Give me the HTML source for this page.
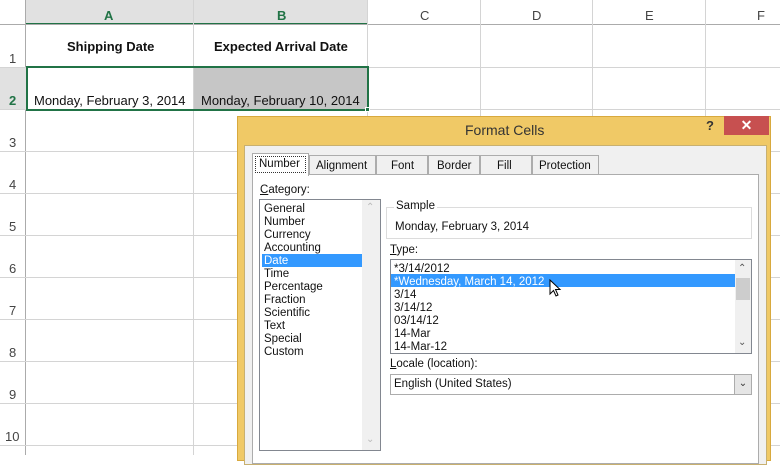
<!DOCTYPE html><html><head><style>
*{margin:0;padding:0;box-sizing:border-box}
body{width:780px;height:455px;overflow:hidden;background:#fff;font-family:"Liberation Sans",sans-serif;position:relative;font-size:12px;color:#222}
.a{position:absolute}
.t{position:absolute;white-space:nowrap}
.vl{position:absolute;top:0;height:455px;width:1px;background:#d4d4d4}
.hl{position:absolute;left:0;width:780px;height:1px;background:#d4d4d4}
.rn{position:absolute;left:0;width:26px;font-size:13px;color:#444;text-align:left;padding-left:9px}
.li{position:absolute;font-size:11.5px;color:#111;white-space:nowrap}
</style></head><body>
<div class="a" style="left:0;top:0;width:780px;height:25px;background:#fff"></div>
<div class="a" style="left:26px;top:0;width:341px;height:24px;background:#e1e1e1"></div>
<div class="a" style="left:0;top:0;width:26px;height:455px;background:#fff;border-right:1px solid #ababab"></div>
<div class="a" style="left:0;top:67px;width:26px;height:42px;background:#e1e1e1"></div>
<div class="a" style="left:26px;top:23px;width:341px;height:2px;background:#217346"></div>
<div class="a" style="left:0;top:24px;width:780px;height:1px;background:#ababab"></div>
<div class="vl" style="left:193px"></div><div class="vl" style="left:367px"></div><div class="vl" style="left:480px"></div><div class="vl" style="left:592px"></div><div class="vl" style="left:705px"></div>
<div class="hl" style="top:67px"></div><div class="hl" style="top:109px"></div><div class="hl" style="top:151px"></div><div class="hl" style="top:193px"></div><div class="hl" style="top:235px"></div><div class="hl" style="top:277px"></div><div class="hl" style="top:319px"></div><div class="hl" style="top:361px"></div><div class="hl" style="top:403px"></div><div class="hl" style="top:445px"></div>
<div class="t" style="left:104px;top:8px;font-size:13px;color:#217346;font-weight:bold">A</div>
<div class="t" style="left:277px;top:8px;font-size:13px;color:#217346;font-weight:bold">B</div>
<div class="t" style="left:420px;top:8px;font-size:13px;color:#444">C</div>
<div class="t" style="left:532px;top:8px;font-size:13px;color:#444">D</div>
<div class="t" style="left:645px;top:8px;font-size:13px;color:#444">E</div>
<div class="t" style="left:757px;top:8px;font-size:13px;color:#444">F</div>
<div class="rn" style="top:51px">1</div><div class="rn" style="top:93px;color:#217346;font-weight:bold">2</div><div class="rn" style="top:135px">3</div><div class="rn" style="top:177px">4</div><div class="rn" style="top:219px">5</div><div class="rn" style="top:261px">6</div><div class="rn" style="top:303px">7</div><div class="rn" style="top:345px">8</div><div class="rn" style="top:387px">9</div><div class="rn" style="top:429px;padding-left:5px">10</div>
<div class="t" style="left:67px;top:39px;font-size:13px;font-weight:bold;color:#111">Shipping Date</div>
<div class="t" style="left:214px;top:39px;font-size:13px;font-weight:bold;color:#111">Expected Arrival Date</div>
<div class="a" style="left:194px;top:68px;width:173px;height:41px;background:#c6c6c6"></div>
<div class="a" style="left:26px;top:66px;width:343px;height:45px;border:2px solid #217346"></div>
<div class="a" style="left:365px;top:107px;width:5px;height:5px;background:#217346;border:1px solid #fff"></div>
<div class="t" style="left:34px;top:93px;font-size:13px;color:#111">Monday, February 3, 2014</div>
<div class="t" style="left:201px;top:93px;font-size:13px;color:#111">Monday, February 10, 2014</div>
<!-- dialog -->
<div class="a" style="left:237px;top:116px;width:534px;height:345px;background:#f0c966;border:1px solid #d8a93e"></div>
<div class="t" style="left:465px;top:122px;font-size:14px;color:#333">Format Cells</div>
<div class="t" style="left:706px;top:118px;font-size:13px;font-weight:bold;color:#333">?</div>
<div class="a" style="left:724px;top:116px;width:45px;height:19px;background:#c75050;color:#fff;text-align:center;font-size:14px;line-height:19px;font-weight:bold">✕</div>
<div class="a" style="left:244px;top:145px;width:523px;height:320px;background:#f0f0f0;border:1px solid #c8b070"></div>
<div class="a" style="left:252px;top:174px;width:507px;height:290px;background:#fff;border:1px solid #acacac"></div>
<div class="a" style="left:309px;top:155px;width:67px;height:20px;background:#f0f0f0;border:1px solid #acacac"></div>
<div class="a" style="left:376px;top:155px;width:52px;height:20px;background:#f0f0f0;border:1px solid #acacac"></div>
<div class="a" style="left:428px;top:155px;width:52px;height:20px;background:#f0f0f0;border:1px solid #acacac"></div>
<div class="a" style="left:480px;top:155px;width:52px;height:20px;background:#f0f0f0;border:1px solid #acacac"></div>
<div class="a" style="left:532px;top:155px;width:67px;height:20px;background:#f0f0f0;border:1px solid #acacac"></div>
<div class="a" style="left:252px;top:153px;width:57px;height:23px;background:#fff;border:1px solid #acacac;border-bottom:none"></div>
<div class="a" style="left:255px;top:156px;width:51px;height:17px;border:1px dotted #333"></div>
<div class="t" style="left:259px;top:158px;font-size:11.5px;color:#111">Number</div>
<div class="t" style="left:316px;top:160px;font-size:11.5px;color:#111">Alignment</div>
<div class="t" style="left:391px;top:160px;font-size:11.5px;color:#111">Font</div>
<div class="t" style="left:437px;top:160px;font-size:11.5px;color:#111">Border</div>
<div class="t" style="left:497px;top:160px;font-size:11.5px;color:#111">Fill</div>
<div class="t" style="left:539px;top:160px;font-size:11.5px;color:#111">Protection</div>
<div class="t" style="left:260px;top:184px;font-size:11.5px;color:#111"><u>C</u>ategory:</div>
<div class="a" style="left:259px;top:199px;width:122px;height:252px;border:1px solid #828790;background:#fff"></div>
<div class="a" style="left:362px;top:200px;width:18px;height:250px;background:#f0f0f0"></div>
<div class="t" style="left:366px;top:202px;font-size:10px;color:#bbb">⌃</div>
<div class="t" style="left:366px;top:434px;font-size:10px;color:#bbb">⌄</div>
<div class="a" style="left:262px;top:254px;width:100px;height:13px;background:#3399ff"></div>
<div class="li" style="left:264px;top:203px">General</div>
<div class="li" style="left:264px;top:216px">Number</div>
<div class="li" style="left:264px;top:229px">Currency</div>
<div class="li" style="left:264px;top:242px">Accounting</div>
<div class="li" style="left:264px;top:255px;color:#fff">Date</div>
<div class="li" style="left:264px;top:268px">Time</div>
<div class="li" style="left:264px;top:281px">Percentage</div>
<div class="li" style="left:264px;top:294px">Fraction</div>
<div class="li" style="left:264px;top:307px">Scientific</div>
<div class="li" style="left:264px;top:320px">Text</div>
<div class="li" style="left:264px;top:333px">Special</div>
<div class="li" style="left:264px;top:346px">Custom</div>
<div class="a" style="left:386px;top:207px;width:366px;height:32px;border:1px solid #dcdcdc"></div>
<div class="t" style="left:394px;top:200px;font-size:11.5px;color:#111;background:#fff;padding:0 2px">Sample</div>
<div class="t" style="left:395px;top:221px;font-size:11.5px;color:#111">Monday, February 3, 2014</div>
<div class="t" style="left:390px;top:244px;font-size:11.5px;color:#111"><u>T</u>ype:</div>
<div class="a" style="left:390px;top:259px;width:362px;height:95px;border:1px solid #828790"></div>
<div class="a" style="left:735px;top:260px;width:16px;height:93px;background:#f0f0f0"></div>
<div class="a" style="left:736px;top:278px;width:14px;height:22px;background:#cdcdcd"></div>
<div class="t" style="left:738px;top:263px;font-size:10px;color:#555">⌃</div>
<div class="t" style="left:738px;top:337px;font-size:10px;color:#555">⌄</div>
<div class="a" style="left:391px;top:274px;width:344px;height:13px;background:#3399ff"></div>
<div class="li" style="left:394px;top:263px">*3/14/2012</div>
<div class="li" style="left:394px;top:276px;color:#fff">*Wednesday, March 14, 2012</div>
<div class="li" style="left:394px;top:289px">3/14</div>
<div class="li" style="left:394px;top:302px">3/14/12</div>
<div class="li" style="left:394px;top:315px">03/14/12</div>
<div class="li" style="left:394px;top:328px">14-Mar</div>
<div class="li" style="left:394px;top:341px">14-Mar-12</div>
<svg class="a" style="left:549px;top:279px" width="14" height="20" viewBox="0 0 14 20"><path d="M1 1 L1 15 L4.5 11.5 L7 17 L9 16 L6.5 10.5 L11 10.5 Z" fill="#fff" stroke="#000" stroke-width="1"/></svg>
<div class="t" style="left:390px;top:358px;font-size:11.5px;color:#111"><u>L</u>ocale (location):</div>
<div class="a" style="left:390px;top:374px;width:362px;height:21px;border:1px solid #acacac;background:#fff"></div>
<div class="a" style="left:734px;top:375px;width:17px;height:19px;background:#e5e5e5;border-left:1px solid #acacac;text-align:center;font-size:10px;line-height:17px;color:#333">⌄</div>
<div class="li" style="left:394px;top:378px">English (United States)</div>
</body></html>
